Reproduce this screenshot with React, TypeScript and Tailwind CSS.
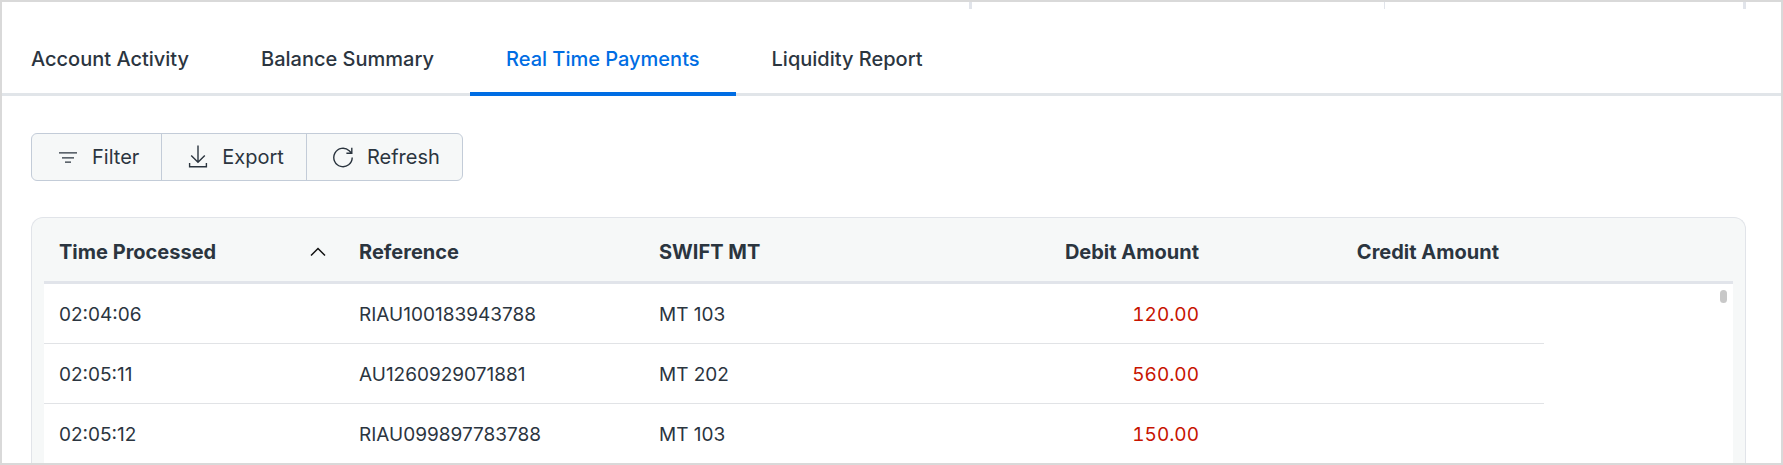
import React, { useState } from 'react';

interface Payment {
  time: string;
  reference: string;
  swift: string;
  debit: string;
  credit: string;
}

const tabs = ['Account Activity', 'Balance Summary', 'Real Time Payments', 'Liquidity Report'];

const payments: Payment[] = [
  { time: '02:04:06', reference: 'RIAU100183943788', swift: 'MT 103', debit: '120.00', credit: '' },
  { time: '02:05:11', reference: 'AU1260929071881', swift: 'MT 202', debit: '560.00', credit: '' },
  { time: '02:05:12', reference: 'RIAU099897783788', swift: 'MT 103', debit: '150.00', credit: '' },
];

const FilterIcon = () => (
  <svg width="20" height="24" viewBox="0 0 20 24" fill="none" stroke="currentColor" strokeWidth="1.4">
    <path d="M1 7.9h18M4 12.9h12M7 17.1h6" />
  </svg>
);

const ExportIcon = () => (
  <svg width="20" height="24" viewBox="0 0 20 24" fill="none" stroke="currentColor" strokeWidth="1.4">
    <path d="M10 .5v16.7M3.2 10.4l6.8 6.8 6.8-6.8M1.6 18v3.8h16.8V18" />
  </svg>
);

const RefreshIcon = () => (
  <svg width="20" height="24" viewBox="0 0 20 24" fill="none" stroke="currentColor" strokeWidth="1.4">
    <path d="M19.2 12.5a9.2 9.2 0 1 1-3-6.8l2.3 2.4M18.8 2.8v5.4h-5.4" />
  </svg>
);

const actions = [
  { label: 'Filter', icon: <FilterIcon /> },
  { label: 'Export', icon: <ExportIcon /> },
  { label: 'Refresh', icon: <RefreshIcon /> },
];

export default function App() {
  const [activeTab, setActiveTab] = useState('Real Time Payments');

  return (
    <div className="flex h-screen flex-col overflow-hidden border-2 border-[#d9d9d9] bg-white font-['Inter',sans-serif] text-[20px] leading-7 text-[#2b353f]">
      {/* Bottom edge of the summary panel above */}
      <div className="flex h-[7px] shrink-0 justify-end pr-[35px]">
        <div className="flex w-[777px] border-x-[3px] border-[#e1e4ea]">
          <div className="w-[413px] border-r border-[#e1e4ea]" />
        </div>
      </div>

      {/* Tabs */}
      <nav role="tablist" className="flex h-[87px] shrink-0 border-b-[3px] border-[#e1e5e9]">
        {tabs.map(tab => (
          <button
            key={tab}
            role="tab"
            aria-selected={tab === activeTab}
            onClick={() => setActiveTab(tab)}
            className={
              tab === activeTab
                ? 'relative -mb-[3px] border-b-4 border-[#006de3] px-9 pt-4 font-medium text-[#006de3]'
                : 'px-9 pt-4 font-medium first:pl-[29px]'
            }
          >
            {tab}
          </button>
        ))}
      </nav>

      {/* Toolbar */}
      <div className="mt-[37px] ml-[29px] flex h-12 shrink-0 self-start overflow-hidden rounded-md border border-[#c3ccd8] bg-[#f6f8f8]">
        {actions.map(action => (
          <button
            key={action.label}
            className="flex items-center gap-[14px] border-r border-[#c3ccd8] pr-[22px] pl-[26px] last:border-r-0"
          >
            {action.icon}
            {action.label}
          </button>
        ))}
      </div>

      {/* Payments table */}
      <div className="mt-9 mr-[35px] ml-[29px] flex-1 rounded-t-xl border border-b-0 border-[#e1e4e9] bg-[#f6f8f8] px-3">
        <div className="relative">
          <table className="w-full table-fixed border-separate border-spacing-0 text-left">
            <thead>
              <tr className="h-[66px] *:border-b-[3px] *:border-[#e1e4ea] *:pt-1 *:font-bold">
                <th className="w-[300px] px-[15px]" aria-sort="ascending">
                  <button className="flex w-full items-center justify-between">
                    Time Processed
                    <svg width="24" height="24" viewBox="0 0 24 24" fill="none" stroke="#111" strokeWidth="1.5">
                      <path d="M6 15.5l7-7 7 7" />
                    </svg>
                  </button>
                </th>
                <th className="w-[300px] px-[15px]">Reference</th>
                <th className="w-[300px] px-[15px]">SWIFT MT</th>
                <th className="w-[300px] pr-[45px] text-right">Debit Amount</th>
                <th className="w-[300px] pr-[45px] text-right">Credit Amount</th>
                <td />
              </tr>
            </thead>
            <tbody className="bg-white text-[19px]">
              {payments.map(payment => (
                <tr key={payment.reference} className="h-[60px] *:border-[#e1e3e6] *:pt-[3px] *:not-last:border-b">
                  <td className="px-[15px]">{payment.time}</td>
                  <td className="px-[15px]">{payment.reference}</td>
                  <td className="px-[15px]">{payment.swift}</td>
                  <td className="pr-[45px] text-right text-[#c71400] tabular-nums">{payment.debit}</td>
                  <td className="pr-[45px] text-right tabular-nums">{payment.credit}</td>
                  <td />
                </tr>
              ))}
            </tbody>
          </table>
          {/* Scroll thumb */}
          <div className="absolute top-[72px] right-[6px] h-[13px] w-[7px] rounded-full bg-[#c8c8c8]" />
        </div>
      </div>
    </div>
  );
}
